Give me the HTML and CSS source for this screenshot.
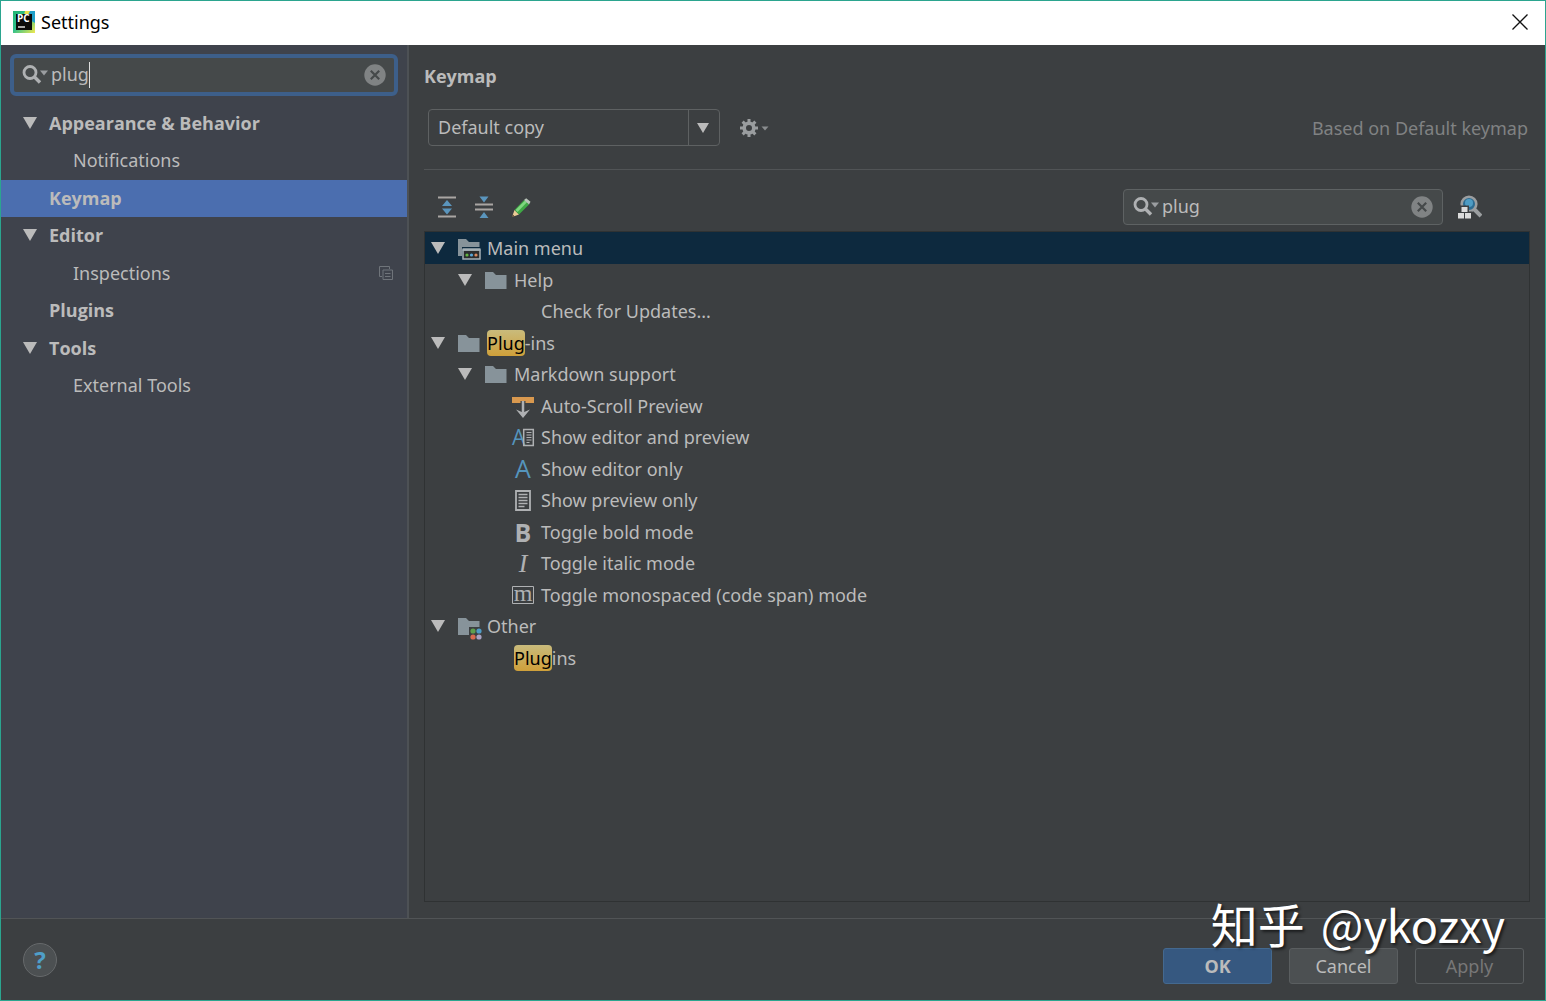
FILE: index.html
```html
<!DOCTYPE html>
<html lang="en">
<head>
    <meta charset="UTF-8">
    <meta name="viewport" content="width=device-width, initial-scale=1.0">
    <title>Settings</title>
    <link rel="stylesheet" href="styles.css">
</head>
<body>
    <svg class="sprite" aria-hidden="true">
        <symbol id="arrow" viewBox="0 0 14 12"><path d="M0 0h14L7 12z" fill="currentColor"/></symbol>
        <symbol id="search" viewBox="0 0 26 20">
            <circle cx="8" cy="7.500" r="6" fill="none" stroke="#afb1b3" stroke-width="2.800"/>
            <path d="M12 11.500l6 6" stroke="#afb1b3" stroke-width="3.400"/>
            <path d="M18 5.500h8l-4 5z" fill="#9a9da0"/>
        </symbol>
        <symbol id="clear" viewBox="0 0 22 22">
            <circle cx="11" cy="11" r="10.700" fill="#808384"/>
            <path d="M6.800 6.800l8.400 8.400M15.200 6.800l-8.400 8.400" stroke="#45494a" stroke-width="2.200"/>
        </symbol>
        <symbol id="folder" viewBox="0 0 24 24">
            <path d="M1 4h8l3 3h10.500v14H1z" fill="#87939a"/>
        </symbol>
    </svg>

    <div class="window">
        <header class="titlebar">
            <svg class="logo" viewBox="0 0 22 22" aria-hidden="true">
                <defs>
                    <linearGradient id="logoFill" x1="0" y1="0" x2="1" y2="1">
                        <stop offset="0" stop-color="#21b573"/>
                        <stop offset="0.450" stop-color="#2fc08c"/>
                        <stop offset="1" stop-color="#f3e84f"/>
                    </linearGradient>
                </defs>
                <rect width="22" height="22" fill="url(#logoFill)"/>
                <path d="M14 0h8v12l-5-3z" fill="#1f9fc9"/>
                <path d="M12 0h5l-2 4h-4z" fill="#e8e14a"/>
                <rect x="3" y="3" width="16" height="16" fill="#0b0b0b"/>
                <text x="4" y="11" font-family="Open Sans, sans-serif" font-size="10" font-weight="700" fill="#fff">PC</text>
                <path d="M5 16h7" stroke="#fff" stroke-width="1.300"/>
            </svg>
            <h1 class="window-title">Settings</h1>
            <button class="close" aria-label="Close">
                <svg viewBox="0 0 16 16" width="16" height="16"><path d="M.5.500l15 15M15.500.500l-15 15" stroke="#111" stroke-width="1.300"/></svg>
            </button>
        </header>

        <div class="content">
            <aside class="sidebar">
                <div class="search search-focused">
                    <svg class="search-icon"><use href="#search"/></svg>
                    <input class="search-input" type="text" value="plug" aria-label="Search settings">
                    <span class="caret"></span>
                    <button class="clear" aria-label="Clear"><svg><use href="#clear"/></svg></button>
                </div>
                <nav class="menu">
                    <a href="#" class="item group"><svg class="arrow"><use href="#arrow"/></svg>Appearance &amp; Behavior</a>
                    <a href="#" class="item child">Notifications</a>
                    <a href="#" class="item group selected"><span class="arrow"></span>Keymap</a>
                    <a href="#" class="item group"><svg class="arrow"><use href="#arrow"/></svg>Editor</a>
                    <a href="#" class="item child">Inspections
                        <svg class="project-icon" viewBox="0 0 14 14"><path d="M3 10.500H.5V.5h10V3M4 4h9.500v9.500H4zM6 7.500h5.500M6 10.500h5.500" fill="none" stroke="#6f747a"/></svg>
                    </a>
                    <a href="#" class="item group"><span class="arrow"></span>Plugins</a>
                    <a href="#" class="item group"><svg class="arrow"><use href="#arrow"/></svg>Tools</a>
                    <a href="#" class="item child">External Tools</a>
                </nav>
            </aside>

            <main class="panel">
                <h2 class="panel-title">Keymap</h2>
                <div class="keymap-row">
                    <div class="combo">
                        <select class="combo-select" aria-label="Keymap">
                            <option>Default copy</option>
                        </select>
                        <span class="combo-arrow"><svg viewBox="0 0 12 10" width="12" height="10"><path d="M0 0h12L6 10z" fill="#bbb"/></svg></span>
                    </div>
                    <button class="icon-button gear" aria-label="Keymap actions">
                        <svg viewBox="0 0 30 20" width="30" height="20">
                            <g stroke="#9a9d9f" fill="none">
                                <circle cx="10" cy="10" r="4.800" stroke-width="3.600"/>
                                <path d="M10 1v4M10 15v4M1 10h4M15 10h4M3.600 3.600l3 3M13.400 13.400l3 3M16.400 3.600l-3 3M6.600 13.400l-3 3" stroke-width="3"/>
                            </g>
                            <path d="M22.500 8.500h7l-3.500 4z" fill="#8a8d8f"/>
                        </svg>
                    </button>
                    <span class="based-on">Based on Default keymap</span>
                </div>

                <div class="toolbar">
                    <button class="icon-button" aria-label="Expand all">
                        <svg viewBox="0 0 22 24" width="22" height="24">
                            <path d="M2 2.500h18M2 21.500h18" stroke="#a9a6a3" stroke-width="2.200"/>
                            <path d="M11 5l5 6H6zM11 19.500l5-6H6z" fill="#5a95bd"/>
                        </svg>
                    </button>
                    <button class="icon-button" aria-label="Collapse all">
                        <svg viewBox="0 0 22 24" width="22" height="24">
                            <path d="M2 9.500h18M2 14.500h18" stroke="#a9a6a3" stroke-width="2.200"/>
                            <path d="M11 7.500L6.500 1.500h9zM11 17l-4.500 6h9z" fill="#5a95bd"/>
                        </svg>
                    </button>
                    <button class="icon-button" aria-label="Edit shortcut">
                        <svg viewBox="0 0 22 24" width="22" height="24">
                            <path d="M2 22l2.500-7 4.500 4.500z" fill="#eccb96"/>
                            <path d="M2 22l.8-2.500 1.700 1.700z" fill="#493a2a"/>
                            <path d="M4.500 15L14 5l5 4.500-10 10z" fill="#3fa845"/>
                            <path d="M5.500 15L15 5.500l2 1.800-9.500 9.700z" fill="#7fd67f"/>
                            <path d="M14 5l2.200-1.700 4.300 3.500L19 9.500z" fill="#b9c4b9"/>
                        </svg>
                    </button>
                    <div class="search search-actions">
                        <svg class="search-icon"><use href="#search"/></svg>
                        <input class="search-input" type="text" value="plug" aria-label="Search actions">
                        <button class="clear" aria-label="Clear"><svg><use href="#clear"/></svg></button>
                    </div>
                    <button class="icon-button find" aria-label="Find by shortcut">
                        <svg viewBox="0 0 24 24" width="24" height="24">
                            <circle cx="11" cy="9" r="7.300" fill="#2d6c92" stroke="#9b9ea0" stroke-width="2.600"/>
                            <circle cx="11" cy="8" r="4" fill="#4e9cc4"/>
                            <path d="M16 14l7 7" stroke="#9b9ea0" stroke-width="4"/>
                            <path d="M-1 24v-7.500h3v-6h9v6h3.500V24z" fill="#3c3f41"/>
                            <path d="M3.500 12h6v5h-6zM0 18h6v5.500H0zM7 18h6v5.500H7z" fill="#dcdcdc"/>
                        </svg>
                    </button>
                </div>

                <ul class="tree">
                    <li class="row selected">
                        <svg class="arrow"><use href="#arrow"/></svg>
                        <svg class="icon" viewBox="0 0 24 24">
                            <path d="M1 3h8l3 3h10.500v5H5v9H1z" fill="#87939a"/>
                            <path d="M6 14h17v9H6z" fill="#2b2d2e" stroke="#a5b0b6" stroke-width="1.500"/>
                            <path d="M5.500 13.500h18" stroke="#a5b0b6" stroke-width="2.500"/>
                            <circle cx="10" cy="19" r="1.600" fill="#62b543"/><circle cx="14.500" cy="19" r="1.600" fill="#59a5d8"/><circle cx="19" cy="19" r="1.600" fill="#d9885e"/>
                        </svg>
                        <span>Main menu</span>
                    </li>
                    <li class="row level-1">
                        <svg class="arrow"><use href="#arrow"/></svg>
                        <svg class="icon"><use href="#folder"/></svg>
                        <span>Help</span>
                    </li>
                    <li class="row level-2"><span class="arrow"></span><span class="icon"></span><span>Check for Updates...</span></li>
                    <li class="row">
                        <svg class="arrow"><use href="#arrow"/></svg>
                        <svg class="icon"><use href="#folder"/></svg>
                        <span><mark>Plug</mark>-ins</span>
                    </li>
                    <li class="row level-1">
                        <svg class="arrow"><use href="#arrow"/></svg>
                        <svg class="icon"><use href="#folder"/></svg>
                        <span>Markdown support</span>
                    </li>
                    <li class="row level-2">
                        <span class="arrow"></span>
                        <svg class="icon" viewBox="0 0 24 24">
                            <path d="M1 3h22v6H1z" fill="#d9994f"/>
                            <path d="M12 7v13" stroke="#3c3f41" stroke-width="5"/>
                            <path d="M12 7v14" stroke="#afb1b3" stroke-width="2.500"/>
                            <path d="M5 15.500l7 3 7-3-7 8.500z" fill="#afb1b3"/>
                        </svg>
                        <span>Auto-Scroll Preview</span>
                    </li>
                    <li class="row level-2">
                        <span class="arrow"></span>
                        <svg class="icon" viewBox="0 0 24 24">
                            <text x="1" y="20" class="letter-narrow" font-size="21" fill="#5595bd">A</text>
                            <path d="M12.700 4.500h9.600v16h-9.600z" fill="none" stroke="#afb1b3" stroke-width="1.500"/>
                            <path d="M15.500 7.500h5M15.500 10h5M15.500 12.500h5M15.500 15h5M15.500 17.500h3" stroke="#afb1b3"/>
                        </svg>
                        <span>Show editor and preview</span>
                    </li>
                    <li class="row level-2">
                        <span class="arrow"></span>
                        <svg class="icon" viewBox="0 0 24 24"><text x="12" y="21" class="letter" text-anchor="middle" font-size="25" fill="#5595bd">A</text></svg>
                        <span>Show editor only</span>
                    </li>
                    <li class="row level-2">
                        <span class="arrow"></span>
                        <svg class="icon" viewBox="0 0 24 24">
                            <path d="M5 3h14v19H5z" fill="none" stroke="#afb1b3" stroke-width="1.800"/>
                            <path d="M7.500 6.500h9M7.500 9.500h9M7.500 12.500h9M7.500 15.500h9M7.500 18.500h6" stroke="#afb1b3" stroke-width="1.300"/>
                        </svg>
                        <span>Show preview only</span>
                    </li>
                    <li class="row level-2">
                        <span class="arrow"></span>
                        <svg class="icon" viewBox="0 0 24 24"><text x="12" y="22" class="letter" text-anchor="middle" font-size="25" font-weight="700" fill="#afb1b3">B</text></svg>
                        <span>Toggle bold mode</span>
                    </li>
                    <li class="row level-2">
                        <span class="arrow"></span>
                        <svg class="icon" viewBox="0 0 24 24"><text x="12" y="21" class="letter-serif" text-anchor="middle" font-size="26" font-style="italic" fill="#afb1b3">I</text></svg>
                        <span>Toggle italic mode</span>
                    </li>
                    <li class="row level-2">
                        <span class="arrow"></span>
                        <svg class="icon" viewBox="0 0 24 24">
                            <path d="M1.500 3.500h21v17h-21z" fill="none" stroke="#afb1b3"/>
                            <text x="12" y="18" class="letter-serif" text-anchor="middle" font-size="24" fill="#afb1b3">m</text>
                        </svg>
                        <span>Toggle monospaced (code span) mode</span>
                    </li>
                    <li class="row">
                        <svg class="arrow"><use href="#arrow"/></svg>
                        <svg class="icon" viewBox="0 0 24 24">
                            <path d="M1 4h8l3 3h10.500v6H12v8H1z" fill="#87939a"/>
                            <circle cx="16" cy="17" r="2.600" fill="#5fa04e"/><circle cx="22" cy="17" r="2.600" fill="#4f9dc7"/>
                            <circle cx="16" cy="23" r="2.600" fill="#d9694f"/><circle cx="22" cy="23" r="2.600" fill="#a9a3c4"/>
                        </svg>
                        <span>Other</span>
                    </li>
                    <li class="row level-1"><span class="arrow"></span><span class="icon"></span><span><mark>Plug</mark>ins</span></li>
                </ul>
            </main>
        </div>

        <footer class="footer">
            <button class="help" aria-label="Help">?</button>
            <div class="actions">
                <button class="button primary">OK</button>
                <button class="button">Cancel</button>
                <button class="button" disabled>Apply</button>
            </div>
        </footer>
        <div class="watermark"><span>知乎</span><span class="handle">@ykozxy</span></div>
    </div>
</body>
</html>
```

FILE: styles.css
```css
* {
    box-sizing: border-box;
}
body {
    margin: 0;
    font-family: "Noto Sans", "Open Sans", sans-serif;
    font-size: 18px;
    line-height: 26px;
    color: #bbbbbb;
    background-color: #3c3f41;
}
button, input, select {
    font: inherit;
    color: inherit;
    border: none;
    padding: 0;
    background: none;
}
.sprite {
    display: none;
}
.window {
    position: relative;
    display: flex;
    flex-direction: column;
    height: 100vh;
    border: 1px solid #2ba58f;
}

/* Title bar */
.titlebar {
    display: flex;
    align-items: center;
    height: 44px;
    padding: 0 17px 2px 12px;
    background-color: #fff;
    color: #000;
}
.logo {
    width: 22px;
    height: 22px;
}
.window-title {
    margin: 0 auto 0 6px;
    font-size: 18px;
    font-weight: 400;
}
.close {
    display: flex;
}

.content {
    flex: 1;
    display: flex;
    min-height: 0;
}

/* Sidebar */
.sidebar {
    width: 408px;
    background-color: #3f434c;
    border-right: 2px solid #4d5155;
}
.search {
    display: flex;
    align-items: center;
    background-color: #45494a;
    border: 1px solid #5e6263;
    border-radius: 4px;
    height: 36px;
    padding: 0 9px;
}
.search-focused {
    height: 42px;
    margin: 9px 9px 9px 9px;
    border: 4px solid #3d5f8a;
    border-radius: 6px;
    padding: 0 8px;
}
.search-icon {
    width: 26px;
    height: 20px;
    margin-right: 3px;
}
.search-input {
    field-sizing: content;
    padding-bottom: 2px;
    outline: none;
}
.caret {
    width: 1px;
    height: 26px;
    background-color: #dddddd;
}
.clear {
    display: flex;
    margin-left: auto;
}
.clear svg {
    width: 22px;
    height: 22px;
}
.menu {
    display: grid;
    grid-auto-rows: 37px 38px;
}
.item {
    display: flex;
    align-items: center;
    color: inherit;
    text-decoration: none;
    padding: 0 14px 2px 22px;
}
.group {
    font-family: "Open Sans", sans-serif;
    font-weight: 700;
}
.child {
    padding-left: 72px;
}
.item .arrow {
    margin-right: 12px;
}
.item.selected {
    background-color: #4b6eaf;
}
.arrow {
    flex: none;
    width: 14px;
    height: 12px;
}
.project-icon {
    width: 14px;
    height: 14px;
    margin-left: auto;
}

/* Keymap panel */
.panel {
    flex: 1;
    display: flex;
    flex-direction: column;
    padding: 15px 15px 16px;
}
.panel-title {
    margin: 0 0 17px;
    font-family: "Open Sans", sans-serif;
    font-size: 18px;
    line-height: 32px;
}
.keymap-row {
    display: flex;
    align-items: center;
    padding: 0 2px 23px 4px;
    border-bottom: 1px solid #515456;
}
.combo {
    position: relative;
    width: 292px;
    height: 37px;
}
.combo-select {
    width: 100%;
    height: 100%;
    padding: 0 40px 2px 9px;
    appearance: none;
    border: 1px solid #5e6162;
    border-radius: 4px;
}
.combo-arrow {
    position: absolute;
    top: 0;
    right: 0;
    width: 32px;
    height: 100%;
    display: flex;
    align-items: center;
    padding-left: 8px;
    border-left: 1px solid #5e6162;
    pointer-events: none;
}
.icon-button {
    display: flex;
}
.gear {
    margin-left: 19px;
}
.based-on {
    margin-left: auto;
    color: #808283;
}
.toolbar {
    display: flex;
    align-items: center;
    gap: 15px;
    padding: 19px 48px 6px 12px;
}
.search-actions {
    width: 320px;
    margin-left: auto;
}

.tree {
    flex: 1;
    display: grid;
    grid-auto-rows: 32px 31px;
    align-content: start;
    margin: 0;
    padding: 0;
    list-style: none;
    border: 1px solid #2f3233;
}
.row {
    display: flex;
    align-items: center;
    padding-left: 6px;
}
.row.selected {
    background-color: #0d293e;
}
.level-1 {
    padding-left: 33px;
}
.level-2 {
    padding-left: 60px;
}
.row .arrow {
    margin-right: 12px;
}
.icon {
    flex: none;
    width: 24px;
    height: 24px;
    margin-right: 6px;
    overflow: visible;
}
.letter {
    font-family: "Open Sans", sans-serif;
}
.letter-narrow {
    font-family: "Liberation Sans Narrow", "Open Sans", sans-serif;
}
.letter-serif {
    font-family: "Liberation Serif", serif;
}
mark {
    display: inline-block;
    color: #000;
    border-radius: 4px;
    background: linear-gradient(#c9bb7c, #cfa03a);
}

/* Footer */
.footer {
    display: flex;
    align-items: center;
    justify-content: space-between;
    height: 82px;
    padding: 12px 21px 0 22px;
    border-top: 1px solid #515456;
}
.help {
    width: 34px;
    height: 34px;
    margin-bottom: 12px;
    border: 1px solid #66696b;
    border-radius: 50%;
    background-color: #4c5052;
    color: #4f9fc9;
    font-size: 24px;
    font-weight: 700;
}
.actions {
    display: flex;
    gap: 17px;
}
.button {
    width: 109px;
    height: 36px;
    border: 1px solid #5a5e60;
    border-radius: 3px;
    background-color: #4c5052;
}
.button.primary {
    font-weight: 700;
    border-color: #44698f;
    background-color: #365880;
}
.button:disabled {
    color: #777777;
    background: none;
}
.watermark {
    position: absolute;
    display: flex;
    align-items: baseline;
    gap: 16px;
    right: 40px;
    bottom: 40px;
    color: #fff;
    font-family: "Noto Sans CJK SC", sans-serif;
    font-size: 47px;
    line-height: 72px;
    text-shadow: 2px 2px 3px rgba(0, 0, 0, 0.6);
    pointer-events: none;
}
.handle {
    font-size: 45px;
}
```
